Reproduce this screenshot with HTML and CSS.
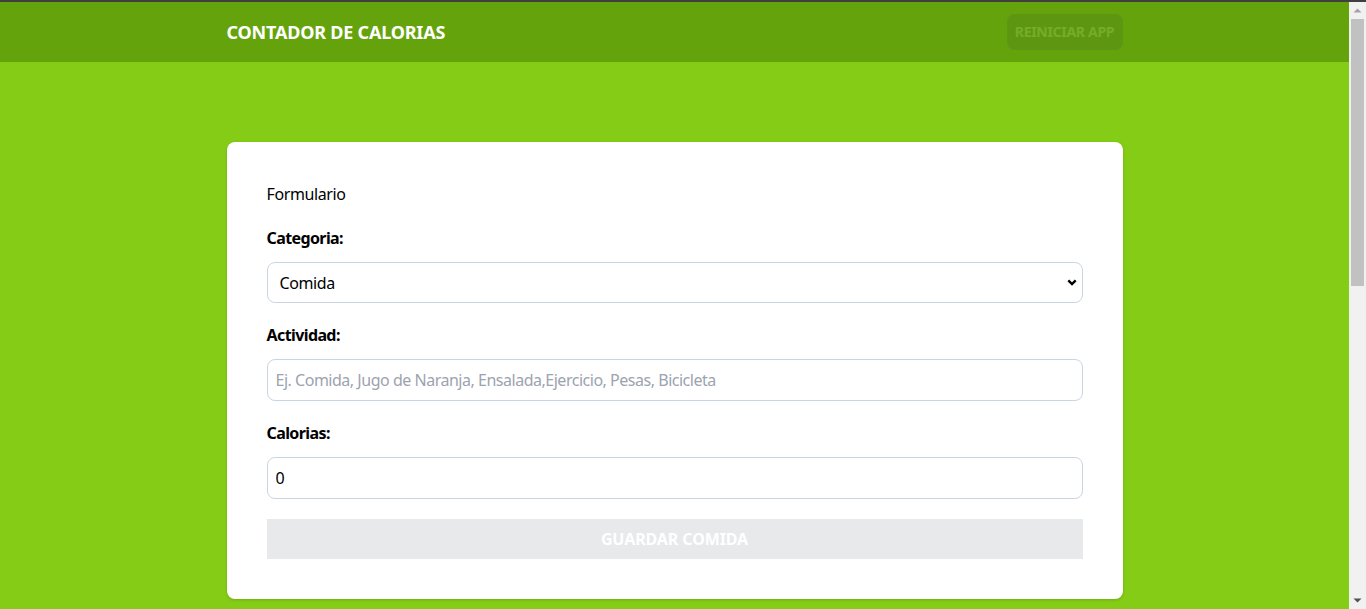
FILE: index.html
```html
<!DOCTYPE html>
<html lang="es">
<head>
<meta charset="utf-8">
<title>Contador de Calorias</title>
<link rel="stylesheet" href="styles.css">
</head>
<body>
<div class="chrome-line"></div>
<div class="page">
  <header class="header">
    <div class="header-inner">
      <h1 class="title">Contador de Calorias</h1>
      <button class="reset-btn" disabled>Reiniciar App</button>
    </div>
  </header>
  <main class="main">
    <form class="card">
      <p class="form-title">Formulario</p>
      <div class="field">
        <label class="label" for="category">Categoria:</label>
        <div class="select-wrap">
          <select id="category" class="control select">
            <option>Comida</option>
            <option>Ejercicio</option>
          </select>
          <svg class="chevron" width="10" height="7" viewBox="0 0 10 7" aria-hidden="true"><path d="M1.3 1.3 L5 5 L8.7 1.3" fill="none" stroke="#000" stroke-width="2.4"/></svg>
        </div>
      </div>
      <div class="field">
        <label class="label" for="activity">Actividad:</label>
        <input id="activity" class="control activity" type="text" placeholder="Ej. Comida, Jugo de Naranja, Ensalada,Ejercicio, Pesas, Bicicleta">
      </div>
      <div class="field">
        <label class="label" for="calories">Calorias:</label>
        <input id="calories" class="control" type="number" value="0">
      </div>
      <button class="submit-btn" type="submit" disabled>Guardar Comida</button>
    </form>
  </main>
</div>
<div class="scrollbar" aria-hidden="true">
  <svg class="sb-arrow sb-up" width="17" height="17" viewBox="0 0 17 17"><path d="M4.5 10.5 L8.5 6.5 L12.5 10.5 Z" fill="#a3a3a3"/></svg>
  <div class="sb-track"><div class="sb-thumb"></div></div>
  <svg class="sb-arrow sb-down" width="17" height="17" viewBox="0 0 17 17"><path d="M4.5 6.5 L8.5 10.5 L12.5 6.5 Z" fill="#505050"/></svg>
</div>
</body>
</html>
```
FILE: styles.css
```css
* { box-sizing: border-box; }
html, body { margin: 0; padding: 0; }
body {
  font-family: "Noto Sans", "Open Sans", sans-serif;
  font-size: 16px;
  line-height: 24px;
  background: #84cc16;
  color: #000;
  letter-spacing: -0.4px;
}
.chrome-line {
  height: 2px;
  background: #3f3f3f;
  position: relative;
  z-index: 2;
}
.page {
  margin-right: 17px;
}
.header {
  background: #65a30d;
}
.header-inner {
  max-width: 896px;
  margin: 0 auto;
  height: 60px;
  display: flex;
  align-items: center;
  justify-content: space-between;
}
.title {
  margin: 0;
  color: #fff;
  font-size: 18px;
  line-height: 28px;
  font-weight: 700;
  text-transform: uppercase;
  letter-spacing: -0.2px;
}
.reset-btn {
  font-family: inherit;
  font-size: 14px;
  line-height: 20px;
  font-weight: 700;
  text-transform: uppercase;
  color: #fff;
  background: #1f2937;
  border: none;
  border-radius: 8px;
  padding: 8px 8px;
  width: 116px;
  height: 36px;
  opacity: 0.1;
  letter-spacing: -0.3px;
  cursor: default;
}
.main {
  padding: 80px 0 40px;
}
.card {
  max-width: 896px;
  margin: 0 auto;
  background: #fff;
  border-radius: 8px;
  padding: 40px;
  box-shadow: 0 1px 3px rgba(0,0,0,0.15);
  display: flex;
  flex-direction: column;
  gap: 20px;
}
.form-title { margin: 0; }
.field {
  display: flex;
  flex-direction: column;
  gap: 12px;
}
.label { font-weight: 700; letter-spacing: -0.6px; }
.control {
  font-family: inherit;
  font-size: 16px;
  line-height: 24px;
  letter-spacing: -0.4px;
  width: 100%;
  height: 42px;
  padding: 8px;
  border: 1px solid #cbd5e1;
  border-radius: 8px;
  background: #fff;
  color: #000;
  outline: none;
}
.activity { letter-spacing: -0.48px; }
.control::placeholder { color: #9ca3af; }
.select-wrap { position: relative; }
.select {
  appearance: none;
  -webkit-appearance: none;
  height: 41px;
  padding: 7px 12px;
}
.chevron {
  position: absolute;
  right: 6px;
  top: 17px;
  pointer-events: none;
}
input[type=number]::-webkit-inner-spin-button,
input[type=number]::-webkit-outer-spin-button { -webkit-appearance: none; margin: 0; }
.submit-btn {
  font-family: inherit;
  font-size: 16px;
  line-height: 24px;
  font-weight: 700;
  text-transform: uppercase;
  color: #fff;
  background: #e8e9eb;
  border: none;
  height: 40px;
  padding: 8px;
  letter-spacing: -0.1px;
  cursor: default;
}
.scrollbar {
  position: fixed;
  top: 2px;
  right: 0;
  bottom: 0;
  width: 17px;
  background: #f1f1f1;
  display: flex;
  flex-direction: column;
}
.sb-arrow { display: block; flex: none; }
.sb-track {
  flex: 1;
  padding: 0 2px;
}
.sb-thumb {
  height: 267px;
  background: #c1c1c1;
}
```
